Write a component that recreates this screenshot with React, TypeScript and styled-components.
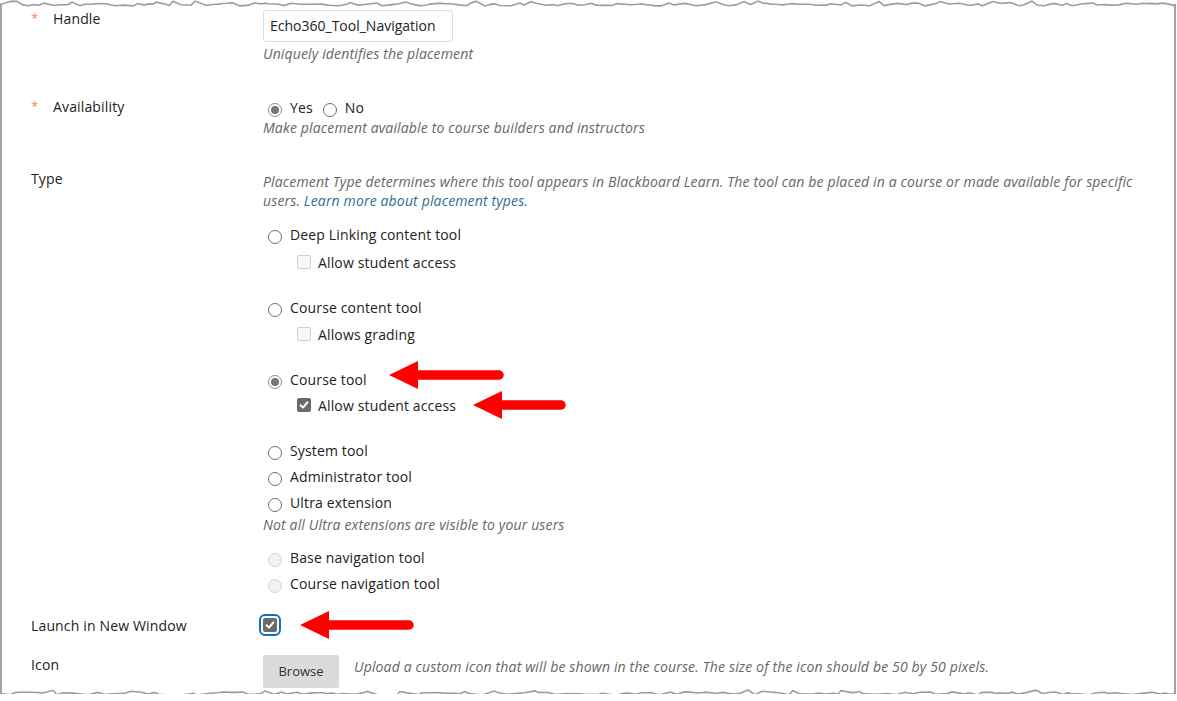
import React from "react";
import styled, { createGlobalStyle } from "styled-components";

const colors = {
  text: "#222222",
  help: "#666666",
  link: "#2f6f92",
  star: "#f5884a",
  edge: "#a2a2a2",
  red: "#ff0000",
};

const GlobalStyle = createGlobalStyle`
  html, body {
    margin: 0;
    padding: 0;
    background: #ffffff;
  }
  body {
    font-family: "Open Sans", "Liberation Sans", sans-serif;
    color: ${colors.text};
    letter-spacing: 0.15px;
  }
`;

const Paper = styled.div`
  position: relative;
  box-sizing: border-box;
  width: 1176px;
  height: 690px;
  margin-top: 4px;
  border-left: 2px solid ${colors.edge};
  border-right: 2px solid ${colors.edge};
  padding: 5px 0 0 29px;
`;

const TornEdge = styled.svg<{ $side: "top" | "bottom" }>`
  position: absolute;
  left: -2px;
  ${(p) => (p.$side === "top" ? "top: -4px;" : "bottom: -4px;")}
  width: 1176px;
  height: 9px;
  overflow: visible;
`;

const FormRow = styled.div<{ $top?: number }>`
  display: grid;
  grid-template-columns: 232px 1fr;
  margin-top: ${(p) => p.$top ?? 0}px;
`;

const Label = styled.div`
  display: flex;
  font-size: 14px;
  line-height: 19px;
`;

const Star = styled.span`
  width: 22px;
  color: ${colors.star};
  font-size: 13px;
  line-height: 19px;
`;

const Value = styled.div`
  display: flex;
  flex-direction: column;
  align-items: flex-start;
  width: 885px;
`;

const TextInput = styled.div`
  box-sizing: border-box;
  width: 190px;
  height: 32px;
  margin-top: 1px;
  padding: 0 6px;
  border: 1px solid #dedede;
  border-radius: 3px;
  font-size: 14px;
  line-height: 30px;
  letter-spacing: 0;
  color: ${colors.text};
`;

const Help = styled.div<{ $top?: number }>`
  margin-top: ${(p) => p.$top ?? 0}px;
  font-size: 14px;
  line-height: 19px;
  font-style: italic;
  color: ${colors.help};
`;

const Link = styled.a`
  color: ${colors.link};
  text-decoration: none;
`;

const Inline = styled.div`
  display: flex;
  align-items: center;
  height: 21px;
  font-size: 14px;
  margin-left: 5px;
`;

const Option = styled.div<{ $sub?: boolean; $top?: number; $h?: number }>`
  display: flex;
  align-items: center;
  height: ${(p) => p.$h ?? 26}px;
  margin-top: ${(p) => p.$top ?? 0}px;
  padding-left: ${(p) => (p.$sub ? 34 : 5)}px;
  font-size: 14px;
  white-space: nowrap;
`;

const Radio = styled.span<{ $checked?: boolean; $disabled?: boolean }>`
  box-sizing: border-box;
  display: inline-flex;
  align-items: center;
  justify-content: center;
  flex-shrink: 0;
  width: 14px;
  height: 14px;
  margin: 5px 8px 0 0;
  border-radius: 50%;
  border: 1px solid
    ${(p) => (p.$disabled ? "#d6d6d6" : p.$checked ? "#8c8c8c" : "#6e6e6e")};
  background: ${(p) => (p.$disabled ? "#f1f1f1" : "#ffffff")};
  &::after {
    content: "";
    display: ${(p) => (p.$checked ? "block" : "none")};
    width: 8px;
    height: 8px;
    border-radius: 50%;
    background: #767676;
  }
`;

const RadioText = styled.span<{ $gap?: number }>`
  margin-right: ${(p) => p.$gap ?? 0}px;
`;

const Check = styled.span<{ $checked?: boolean; $focus?: boolean }>`
  box-sizing: border-box;
  display: inline-flex;
  align-items: center;
  justify-content: center;
  flex-shrink: 0;
  width: 14px;
  height: 14px;
  margin-right: 7px;
  border-radius: 2px;
  border: 1px solid ${(p) => (p.$checked ? "#6b6b6b" : "#cfcfcf")};
  background: ${(p) => (p.$checked ? "#6b6b6b" : "#f7f7f7")};
  ${(p) => (p.$focus ? "outline: 2px solid #1170c4; outline-offset: 2px;" : "")}
`;

const ArrowSvg = styled.svg<{ $shift?: number; $gap: number }>`
  flex-shrink: 0;
  margin-left: ${(p) => p.$gap}px;
  transform: translateY(${(p) => p.$shift ?? 0}px);
`;

const LaunchRow = styled(FormRow)`
  align-items: center;
  height: 21px;
`;

const LaunchValue = styled.div`
  display: flex;
  align-items: center;
  height: 21px;
`;

const IconValue = styled.div`
  display: flex;
  align-items: flex-start;
  gap: 15px;
`;

const BrowseButton = styled.button`
  width: 76px;
  height: 33px;
  border: none;
  border-radius: 2px;
  background: #dbdbdb;
  font-family: "Open Sans", "Liberation Sans", sans-serif;
  font-size: 13px;
  line-height: 31px;
  color: #333333;
  padding: 0;
`;

const tornPath = (width: number, seed: number) => {
  let s = seed;
  const rnd = () => {
    s = (s * 9301 + 49297) % 233280;
    return s / 233280;
  };
  let d = "M0 4.5";
  let x = 0;
  while (x < width) {
    x += 3 + Math.floor(rnd() * 9);
    const bump = rnd() > 0.88 ? -2 : 0;
    const y = 4.5 + (rnd() - 0.5) * 3 + bump;
    d += ` L${Math.min(x, width)} ${y.toFixed(1)}`;
  }
  return d;
};

const CheckMark = () => (
  <svg width="10" height="10" viewBox="0 0 10 10">
    <path d="M1.6 5.2 L4 7.6 L8.4 2.4" fill="none" stroke="#fff" strokeWidth="2" strokeLinecap="round" strokeLinejoin="round" />
  </svg>
);

const Arrow = ({ length, gap, shift }: { length: number; gap: number; shift?: number }) => (
  <ArrowSvg width={length} height={30} viewBox={`0 0 ${length} 30`} $gap={gap} $shift={shift}>
    <polygon points="0,15 29,1 29,29" fill={colors.red} />
    <line x1="27" y1="15" x2={length - 5} y2="15" stroke={colors.red} strokeWidth="9.5" strokeLinecap="round" />
  </ArrowSvg>
);

const App = () => {
  return (
    <>
      <GlobalStyle />
      <Paper>
        <TornEdge $side="top" viewBox="0 0 1176 9">
          <path d={tornPath(1176, 17)} fill="none" stroke="#9c9c9c" strokeWidth="1.6" />
        </TornEdge>

        <FormRow>
          <Label>
            <Star>*</Star>Handle
          </Label>
          <Value>
            <TextInput>Echo360_Tool_Navigation</TextInput>
            <Help $top={2}>Uniquely identifies the placement</Help>
          </Value>
        </FormRow>

        <FormRow $top={34}>
          <Label>
            <Star>*</Star>Availability
          </Label>
          <Value>
            <Inline>
              <Radio $checked />
              <RadioText $gap={10}>Yes</RadioText>
              <Radio />
              <RadioText>No</RadioText>
            </Inline>
            <Help>Make placement available to course builders and instructors</Help>
          </Value>
        </FormRow>

        <FormRow $top={32}>
          <Label>Type</Label>
          <Value>
            <Help $top={3}>
              Placement Type determines where this tool appears in Blackboard Learn. The tool can be placed in a
              course or made available for specific users. <Link>Learn more about placement types.</Link>
            </Help>

            <Option $top={11}>
              <Radio />
              Deep Linking content tool
            </Option>
            <Option $sub $top={2}>
              <Check />
              Allow student access
            </Option>

            <Option $top={19}>
              <Radio />
              Course content tool
            </Option>
            <Option $sub $top={1}>
              <Check />
              Allows grading
            </Option>

            <Option $top={19}>
              <Radio $checked />
              Course tool
              <Arrow length={115} gap={22} shift={-4} />
            </Option>
            <Option $sub>
              <Check $checked>
                <CheckMark />
              </Check>
              Allow student access
              <Arrow length={93} gap={17} />
            </Option>

            <Option $top={20} $h={25.5}>
              <Radio />
              System tool
            </Option>
            <Option $h={25.5}>
              <Radio />
              Administrator tool
            </Option>
            <Option $h={26}>
              <Radio />
              Ultra extension
            </Option>
            <Help>Not all Ultra extensions are visible to your users</Help>

            <Option $top={11} $h={25.5}>
              <Radio $disabled />
              Base navigation tool
            </Option>
            <Option $h={26}>
              <Radio $disabled />
              Course navigation tool
            </Option>
          </Value>
        </FormRow>

        <LaunchRow $top={18}>
          <Label>Launch in New Window</Label>
          <LaunchValue>
            <Check $checked $focus>
              <CheckMark />
            </Check>
            <Arrow length={114} gap={16} />
          </LaunchValue>
        </LaunchRow>

        <FormRow $top={19}>
          <Label>Icon</Label>
          <IconValue>
            <BrowseButton>Browse</BrowseButton>
            <Help $top={2}>
              Upload a custom icon that will be shown in the course. The size of the icon should be 50 by 50 pixels.
            </Help>
          </IconValue>
        </FormRow>

        <TornEdge $side="bottom" viewBox="0 0 1176 9">
          <path d={tornPath(1176, 91)} fill="none" stroke="#9c9c9c" strokeWidth="1.6" />
        </TornEdge>
      </Paper>
    </>
  );
};

export default App;
